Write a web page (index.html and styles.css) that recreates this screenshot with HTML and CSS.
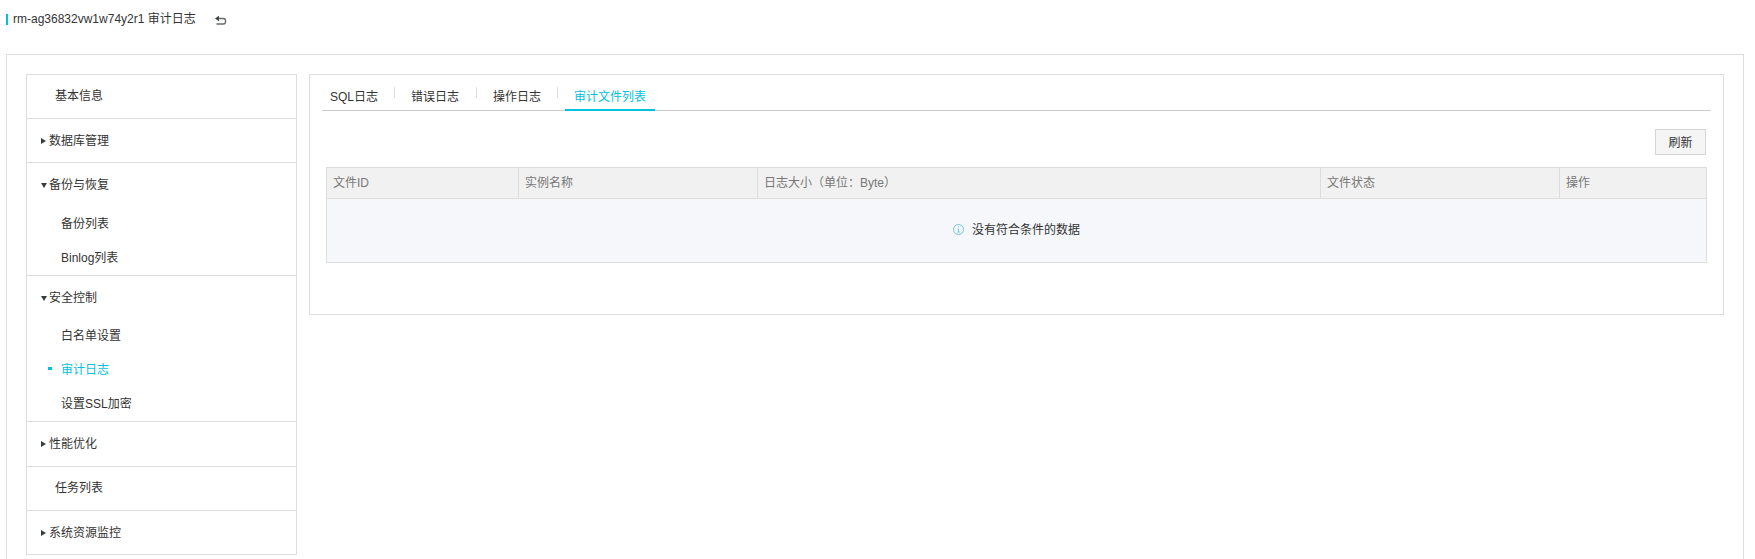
FILE: index.html
```html
<!DOCTYPE html>
<html lang="zh-CN">
<head>
<meta charset="utf-8">
<title>审计日志</title>
<link rel="stylesheet" href="styles.css">
</head>
<body>
<header class="title">
  <span class="title-bar"></span>
  <h1 class="title-text"><span class="instance">rm-ag36832vw1w74y2r1</span> 审计日志</h1>
  <svg class="back" width="12" height="11" viewBox="0 0 12 11"><path d="M0 3.500 4 .8v5.400z" fill="#373d41"/><path d="M3.500 3.500h5c1.300 0 2.100.9 2.100 2.700s-.8 2.800-2.100 2.800H1.500" fill="none" stroke="#666a66" stroke-width="1.300"/></svg>
</header>
<div class="page">
  <nav class="sidebar">
    <div class="group"><a class="item plain">基本信息</a></div>
    <div class="group"><a class="item"><i class="arrow right"></i>数据库管理</a></div>
    <div class="group">
      <a class="item tall"><i class="arrow down"></i>备份与恢复</a>
      <a class="sub">备份列表</a>
      <a class="sub">Binlog列表</a>
    </div>
    <div class="group">
      <a class="item"><i class="arrow down"></i>安全控制</a>
      <a class="sub">白名单设置</a>
      <a class="sub active"><i class="dot"></i>审计日志</a>
      <a class="sub">设置SSL加密</a>
    </div>
    <div class="group"><a class="item tall"><i class="arrow right"></i>性能优化</a></div>
    <div class="group"><a class="item plain">任务列表</a></div>
    <div class="group"><a class="item"><i class="arrow right"></i>系统资源监控</a></div>
  </nav>
  <main class="panel">
    <div class="tabs">
      <a class="tab first">SQL日志</a><i class="sep"></i>
      <a class="tab">错误日志</a><i class="sep"></i>
      <a class="tab narrow">操作日志</a><i class="sep"></i>
      <a class="tab current">审计文件列表</a>
    </div>
    <div class="toolbar"><button class="refresh">刷新</button></div>
    <div class="table">
      <div class="thead">
        <div class="th">文件ID</div>
        <div class="th">实例名称</div>
        <div class="th">日志大小（单位：Byte）</div>
        <div class="th">文件状态</div>
        <div class="th">操作</div>
      </div>
      <div class="empty">
        <svg width="11" height="11" viewBox="0 0 11 11"><circle cx="5.500" cy="5.500" r="5" fill="none" stroke="#70c3e0"/><path d="M5.500 2.500v1M4.500 4.900h1v3M4.200 8h2.600" fill="none" stroke="#70c3e0" stroke-width=".9"/></svg>
        <span>没有符合条件的数据</span>
      </div>
    </div>
  </main>
</div>
</body>
</html>
```
FILE: styles.css
```css
* { box-sizing: border-box; }
body {
  margin: 0;
  height: 559px;
  overflow: hidden;
  display: flex;
  flex-direction: column;
  background: #fff;
  color: #333;
  font: 12px/18px "Liberation Sans", Arial, "Noto Sans CJK SC", sans-serif;
}
.title {
  display: flex;
  align-items: center;
  height: 54px;
  padding: 0 0 16px 6px;
  flex: none;
}
.title-bar { width: 2px; height: 11px; background: #00c1de; }
.title-text { margin: 0 0 0 5px; font-size: 12px; font-weight: normal; white-space: nowrap; }
.back { margin: 2px 0 0 19px; }
.page {
  display: flex;
  align-items: flex-start;
  gap: 12px;
  flex: none;
  width: 1738px;
  height: 520px;
  margin-left: 6px;
  padding: 19px;
  border: 1px solid #ddd;
}
.sidebar { width: 271px; border: 1px solid #ddd; border-bottom: 0; flex: none; }
.group { border-bottom: 1px solid #ddd; }
.item { display: flex; align-items: center; height: 43px; padding-left: 14px; }
.item.tall { height: 44px; }
.item.plain { padding: 0 0 2px 28px; }
.arrow { width: 8px; height: 6px; flex: none; }
.arrow::before { content: ""; display: block; width: 0; height: 0; border: solid transparent; }
.arrow.right::before { border-width: 3px 0 3px 5px; border-left-color: #373d41; }
.arrow.down { padding-top: 1px; }
.arrow.down::before { border-width: 5px 3px 0; border-top-color: #373d41; }
.sub { display: flex; align-items: center; height: 34px; padding-left: 34px; }
.sub.active { color: #00c1de; padding-left: 21px; }
.dot { width: 4px; height: 3px; margin: 0 9px 3px 0; background: #00c1de; }
.panel { flex: 1; height: 241px; border: 1px solid #ddd; padding: 0 12px; }
.tabs { display: flex; height: 36px; border-bottom: 1px solid #ccc; }
.tab { width: 81px; height: 36px; padding: 13px 0 0 16px; white-space: nowrap; }
.tab.first { width: 72px; padding-left: 8px; }
.tab.narrow { width: 80px; }
.tab.current { width: 90px; margin-left: 7px; padding-left: 9px; color: #00c1de; border-bottom: 2px solid #00c1de; }
.sep { width: 1px; height: 11px; margin-top: 12px; background: #ddd; }
.toolbar { display: flex; justify-content: flex-end; padding: 18px 5px 12px 0; }
.refresh {
  width: 51px;
  height: 26px;
  padding: 2px 0 0;
  border: 1px solid #d4d4d4;
  background: #f5f5f6;
  color: #333;
  font: inherit;
}
.table { margin: 0 4px; border: 1px solid #ddd; }
.thead {
  display: grid;
  grid-template-columns: 192px 239px 563px 239px 1fr;
  height: 31px;
  background: #f1f1f1;
  border-bottom: 1px solid #ddd;
  color: #777;
}
.th { padding: 6px 0 0 6px; border-right: 1px solid #ddd; white-space: nowrap; }
.th:last-child { border-right: 0; }
.empty { display: flex; align-items: center; justify-content: center; gap: 8px; height: 63px; padding-bottom: 2px; background: #f5f7fa; }
```
